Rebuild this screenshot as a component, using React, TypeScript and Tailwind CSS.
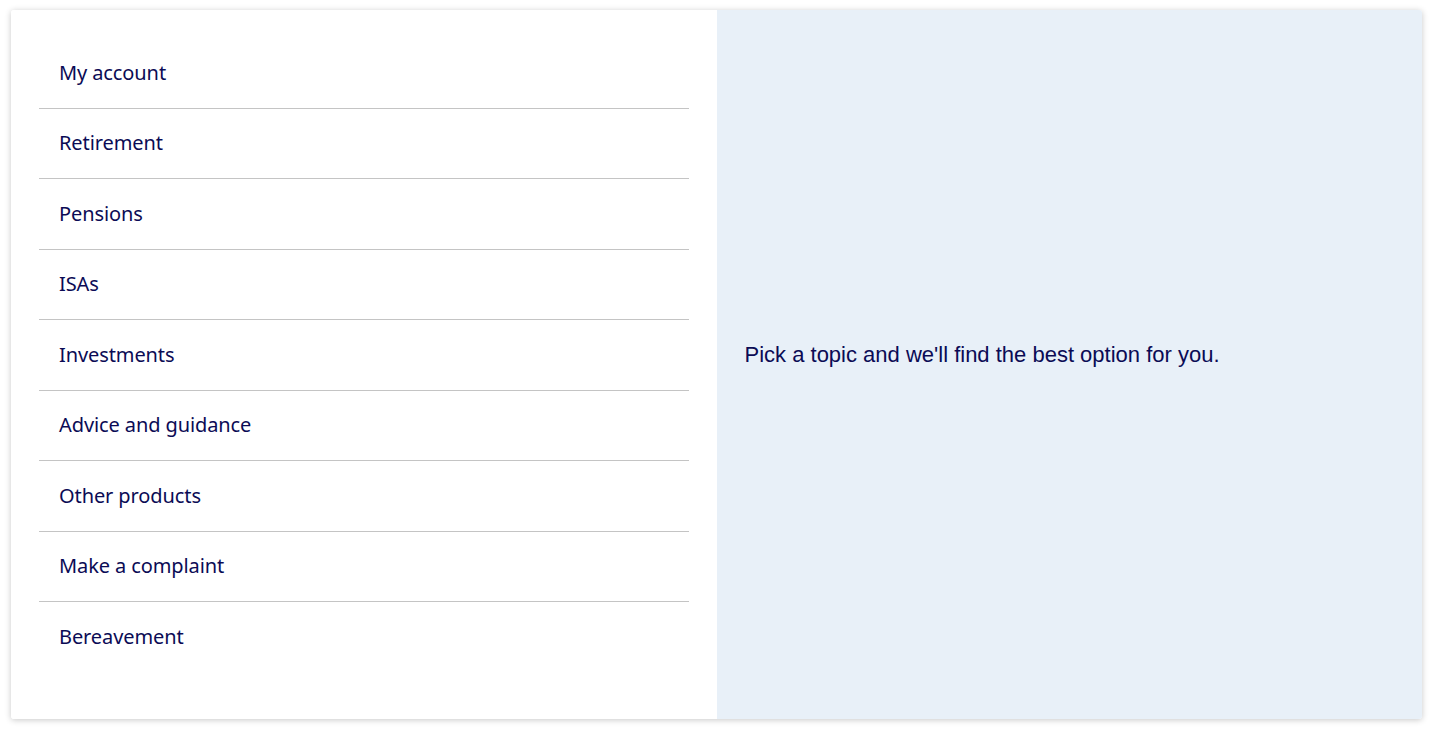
import React from "react";

const items = [
  "My account",
  "Retirement",
  "Pensions",
  "ISAs",
  "Investments",
  "Advice and guidance",
  "Other products",
  "Make a complaint",
  "Bereavement",
];

export default function App() {
  return (
    <div className="w-[1440px] h-[735px] bg-white pt-[10px] pl-[11px]">
      <div className="w-[1411px] h-[709px] flex rounded-[3px] overflow-hidden shadow-[0_1px_6px_rgba(0,0,0,0.22)]">
        <div className="w-1/2 bg-white pt-[28px] px-[28px]">
          <ul className="flex flex-col">
            {items.map((t, i) => (
              <li
                key={t}
                className={`flex items-center pl-[20px] h-[70.5px] ${
                  i < items.length - 1 ? "border-b border-[#c4c4c4]" : ""
                }`}
              >
                <span
                  className="text-[20px] text-[#0b0b55] tracking-[-0.1px]"
                  style={{ fontFamily: '"Noto Sans", "Open Sans", sans-serif' }}
                >
                  {t}
                </span>
              </li>
            ))}
          </ul>
        </div>
        <div className="w-1/2 bg-[#e8f0f8] flex items-center pl-[28px] pb-[21px]">
          <p
            className="text-[22px] text-[#0b0b55]"
            style={{ fontFamily: '"Liberation Sans", Arial, sans-serif' }}
          >
            Pick a topic and we'll find the best option for you.
          </p>
        </div>
      </div>
    </div>
  );
}
